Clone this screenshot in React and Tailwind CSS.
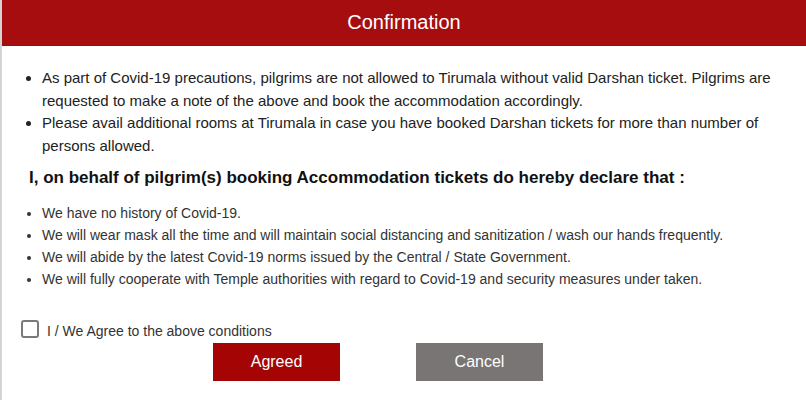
import React, { useState } from 'react';

const precautions = [
  'As part of Covid-19 precautions, pilgrims are not allowed to Tirumala without valid Darshan ticket. Pilgrims are requested to make a note of the above and book the accommodation accordingly.',
  'Please avail additional rooms at Tirumala in case you have booked Darshan tickets for more than number of persons allowed.',
];

const declarations = [
  'We have no history of Covid-19.',
  'We will wear mask all the time and will maintain social distancing and sanitization / wash our hands frequently.',
  'We will abide by the latest Covid-19 norms issued by the Central / State Government.',
  'We will fully cooperate with Temple authorities with regard to Covid-19 and security measures under taken.',
];

export default function App() {
  const [agreed, setAgreed] = useState(false);

  return (
    <div className="w-[806px] h-[400px] bg-white border-l-2 border-[#d4d4d4] overflow-hidden font-['Liberation_Sans',Arial,sans-serif]">
      {/* header */}
      <div className="h-[46px] bg-[#a60d0f] border-b border-[#9a0c0d] flex items-center justify-center">
        <h2 className="text-[20px] text-white leading-none -mt-[2px]">Confirmation</h2>
      </div>

      <div className="pl-[27px] pr-[20px] pt-[21px]">
        <ul className="list-disc pl-[13px] text-[15px] leading-[22.5px] text-[#222]">
          {precautions.map((p) => (
            <li key={p}>{p}</li>
          ))}
        </ul>

        <h3 className="mt-[10px] text-[17px] leading-[22px] font-bold text-[#111]">
          I, on behalf of pilgrim(s) booking Accommodation tickets do hereby declare that :
        </h3>

        <ul className="mt-[13px] list-disc pl-[13px] text-[14px] leading-[22px] text-[#333]">
          {declarations.map((d) => (
            <li key={d}>{d}</li>
          ))}
        </ul>
      </div>

      {/* agree checkbox */}
      <label className="mt-[30px] ml-[19px] flex items-center gap-[8px] cursor-pointer">
        <span
          onClick={() => setAgreed(!agreed)}
          className="w-[18px] h-[18px] border-2 border-[#7a7a7a] rounded-[3px] bg-white flex items-center justify-center"
        >
          {agreed && (
            <svg viewBox="0 0 12 12" className="w-[12px] h-[12px]" fill="none" stroke="#555" strokeWidth="2">
              <path d="M2 6l3 3 5-6" />
            </svg>
          )}
        </span>
        <span className="text-[14px] text-[#333] leading-none mt-[4px]">I / We Agree to the above conditions</span>
      </label>

      {/* buttons */}
      <div className="mt-[5px] ml-[211px] flex gap-[76px]">
        <button className="w-[127px] h-[38px] bg-[#a50405] text-white text-[16px]">Agreed</button>
        <button className="w-[127px] h-[38px] bg-[#797574] text-white text-[16px]">Cancel</button>
      </div>
    </div>
  );
}
